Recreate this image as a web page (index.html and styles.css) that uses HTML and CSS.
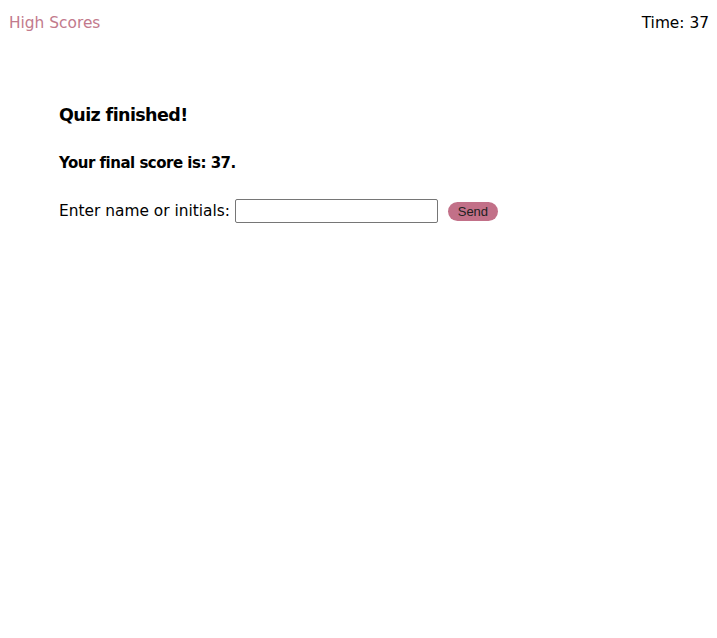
FILE: index.html
```html
<!DOCTYPE html>
<html>
<head>
<meta charset="utf-8">
<link rel="stylesheet" href="styles.css">
</head>
<body>
<header class="topbar">
  <a class="scores-link" href="#">High Scores</a>
  <div class="timer">Time: 37</div>
</header>
<main class="content">
  <h2 class="title">Quiz finished!</h2>
  <p class="score">Your final score is: 37.</p>
  <form class="entry">
    <label class="label" for="initials">Enter name or initials:</label>
    <input class="field" id="initials" type="text">
    <button class="send" type="button">Send</button>
  </form>
</main>
</body>
</html>
```
FILE: styles.css
```css
html, body {
  margin: 0;
  padding: 0;
  background: #fff;
}
body {
  font-family: "DejaVu Sans", Verdana, sans-serif;
  color: #000;
  font-size: 15.4px;
}
.topbar {
  display: flex;
  justify-content: space-between;
  align-items: center;
  padding: 13px 8px 0 9px;
  height: 20px;
}
.scores-link {
  color: #c27a8c;
  text-decoration: none;
}
.timer {
  color: #000;
}
.content {
  padding: 0 59px;
  margin-top: 72px;
}
.title {
  font-size: 17.5px;
  letter-spacing: -0.6px;
  font-weight: bold;
  margin: 0;
}
.score {
  font-size: 15px;
  letter-spacing: -0.5px;
  font-weight: bold;
  margin: 29px 0 0;
}
.entry {
  display: flex;
  align-items: center;
  margin-top: 27px;
}
.label {
  margin-right: 5px;
}
.field {
  width: 199px;
  height: 20px;
  padding: 1px;
  border: 1px solid #767676;
  border-radius: 2px;
  margin: 0 10px 0 0;
}
.send {
  font-family: "Liberation Sans", Arial, sans-serif;
  font-size: 13px;
  background: #c27088;
  color: #222;
  border: none;
  border-radius: 10px;
  width: 50px;
  height: 19px;
  padding: 0;
}
```
